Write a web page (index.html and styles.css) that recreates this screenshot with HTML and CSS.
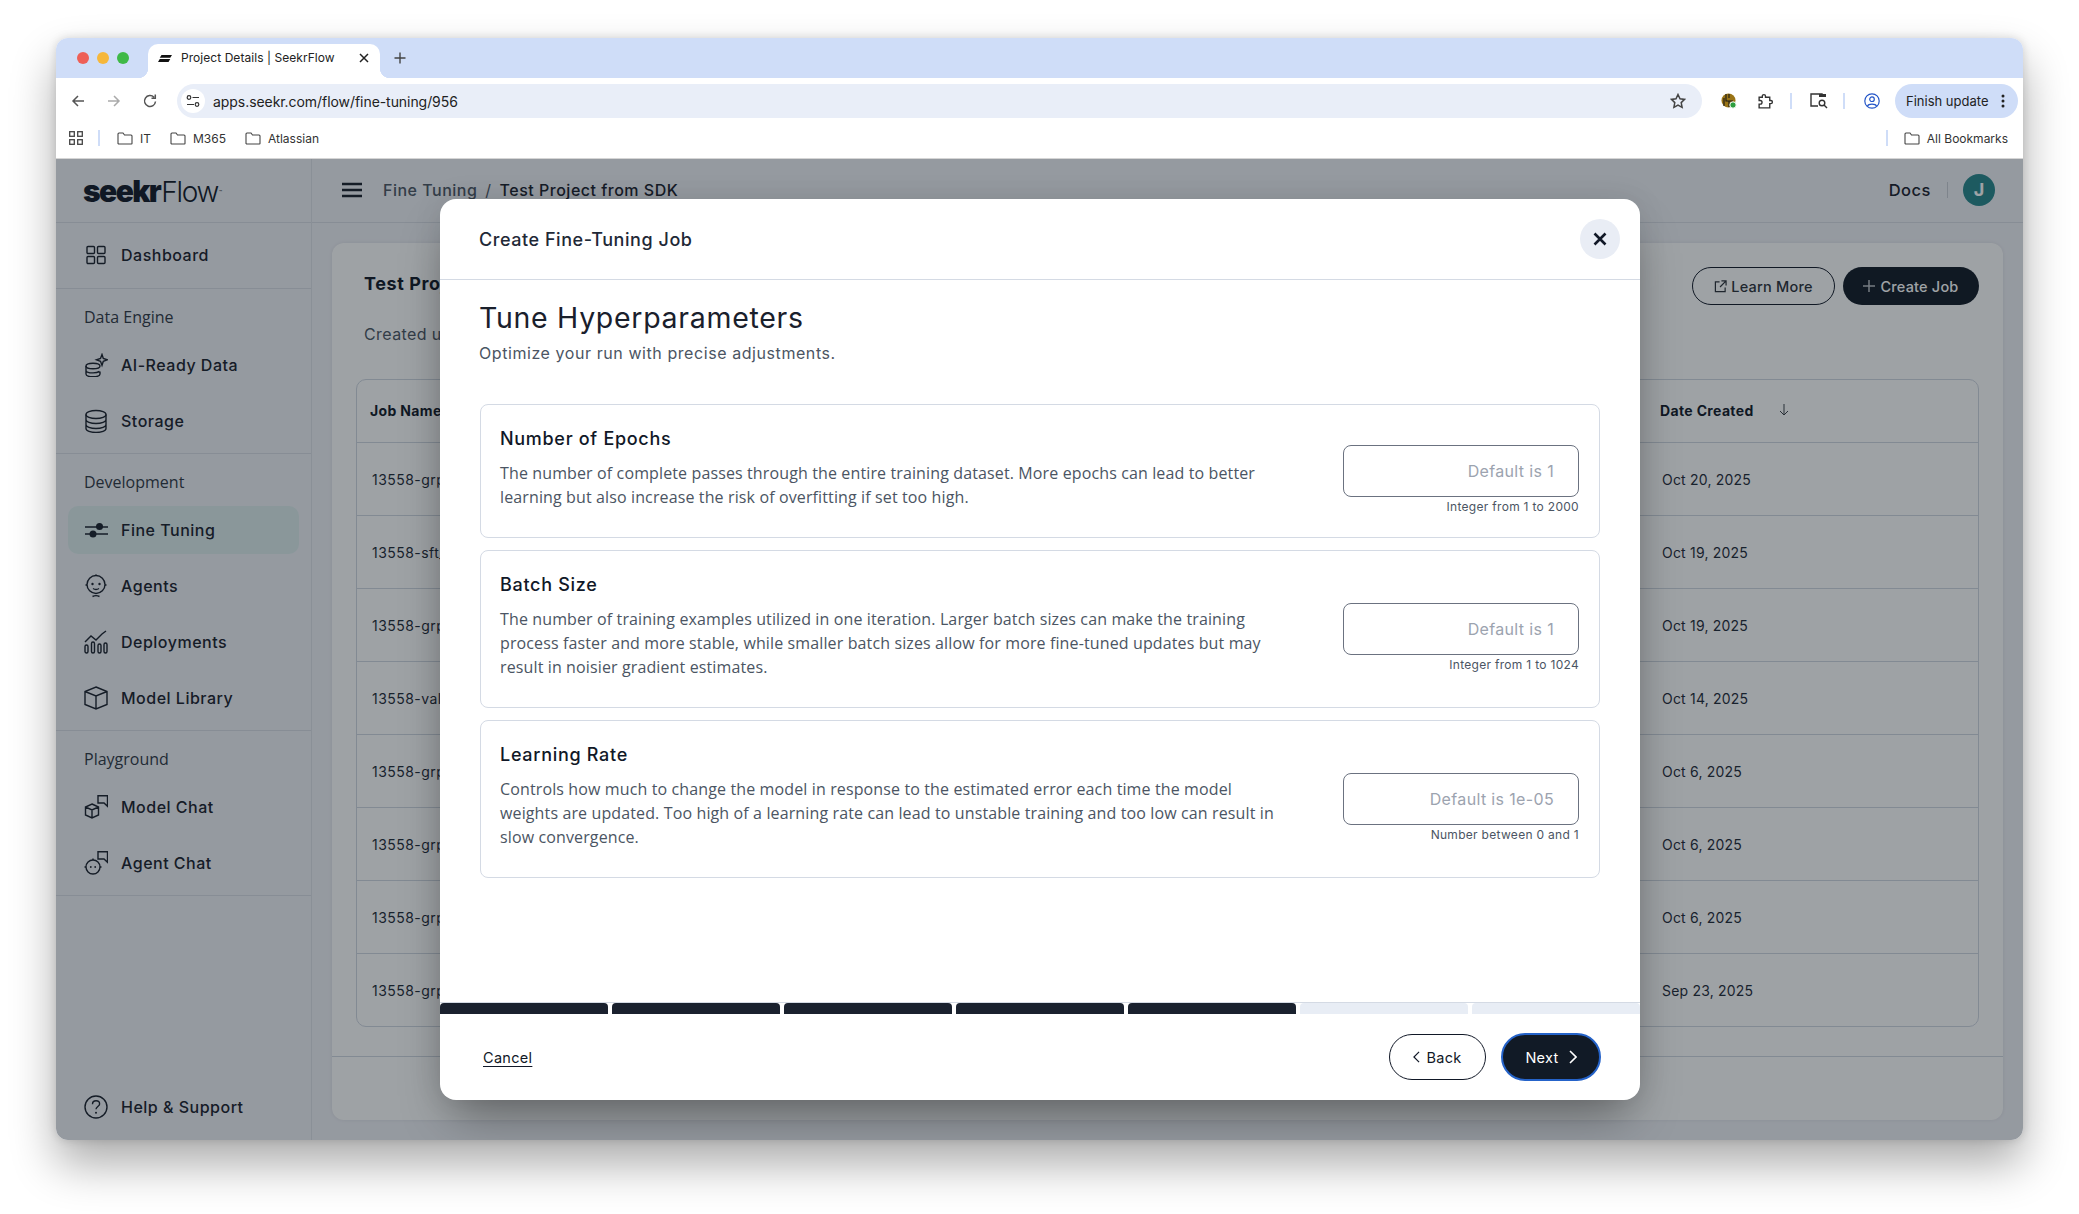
FILE: index.html
```html
<!DOCTYPE html>
<html lang="en">
<head>
<meta charset="utf-8">
<title>Project Details | SeekrFlow</title>
<link rel="stylesheet" href="styles.css">
</head>
<body>
<div class="window">
  <div class="tabstrip">
    <div class="lights"><i class="light red"></i><i class="light amber"></i><i class="light green"></i></div>
    <div class="tab">
      <svg class="favicon" viewBox="0 0 16 8" width="14" height="7"><path d="M4 0h12l-2 3H2zM2 4.500h12L12 8H0z" fill="#111"/></svg>
      <span class="tab-title">Project Details | SeekrFlow</span>
      <svg class="tab-close" viewBox="0 0 10 10" width="10" height="10"><path d="M1 1l8 8M9 1l-8 8" stroke="#222" stroke-width="1.500"/></svg>
    </div>
    <svg class="newtab" viewBox="0 0 12 12" width="12" height="12"><path d="M6 .5v11M.5 6h11" stroke="#444" stroke-width="1.400"/></svg>
  </div>

  <div class="toolbar">
    <div class="nav">
      <span class="tbtn"><svg viewBox="0 0 16 16" width="16" height="16"><path d="M14 8H3M8 3L3 8l5 5" fill="none" stroke="#555" stroke-width="1.500"/></svg></span>
      <span class="tbtn"><svg viewBox="0 0 16 16" width="16" height="16"><path d="M2 8h11M8 3l5 5-5 5" fill="none" stroke="#aaa" stroke-width="1.500"/></svg></span>
      <span class="tbtn"><svg viewBox="0 0 16 16" width="16" height="16"><path d="M13.500 8.500A5.500 5.500 0 1 1 12 4.200M13.300 1.500v3.800H9.500" fill="none" stroke="#555" stroke-width="1.500"/></svg></span>
    </div>
    <div class="omnibox">
      <span class="site"><svg viewBox="0 0 14 14" width="14" height="14"><g fill="none" stroke="#333" stroke-width="1.200"><circle cx="3" cy="3.500" r="1.800"/><circle cx="11" cy="10.500" r="1.800"/><path d="M6.500 3.500H13M1 10.500h7"/></g></svg></span>
      <span class="url">apps.seekr.com/flow/fine-tuning/956</span>
      <svg class="star" viewBox="0 0 16 16" width="16" height="16"><path d="M8 1.500l2 4.300 4.600.6-3.400 3.200.9 4.700L8 12l-4.100 2.300.9-4.700L1.400 6.400 6 5.800z" fill="none" stroke="#444" stroke-width="1.500"/></svg>
    </div>
    <span class="tool"><svg viewBox="0 0 16 16" width="16" height="16"><circle cx="7.500" cy="7.500" r="7" fill="#9a7416"/><path d="M5 1v7h7M8 1v4M3 5v8M8 8v6" stroke="#1a1a1a" stroke-width="1.100" fill="none"/><circle cx="12" cy="12" r="3.200" fill="#2e9e3f" stroke="#fff"/></svg></span>
    <span class="tool"><svg viewBox="0 0 16 16" width="17" height="17"><path d="M2 4h3V3a1.500 1.500 0 0 1 3 0v1h4v3h1a1.500 1.500 0 0 1 0 3h-1v4H2v-3.500h1a1.700 1.700 0 0 0 0-3.500H2z" fill="none" stroke="#333" stroke-width="1.300"/></svg></span>
    <i class="tsep"></i>
    <span class="tool"><svg viewBox="0 0 18 16" width="18" height="16"><path d="M8 13H1V1h11v3" fill="none" stroke="#333" stroke-width="1.400"/><rect x="9" y="1" width="7" height="3" fill="#333"/><circle cx="12" cy="10" r="2.800" fill="none" stroke="#333" stroke-width="1.400"/><path d="M14 12l3 3" stroke="#333" stroke-width="1.400"/></svg></span>
    <i class="tsep"></i>
    <span class="tool"><svg viewBox="0 0 16 16" width="16" height="16"><g fill="none" stroke="#2456c8" stroke-width="1.200"><circle cx="8" cy="8" r="7.200"/><circle cx="8" cy="6.200" r="2.300"/><path d="M3.500 13c1-2.500 8-2.500 9 0"/></g></svg></span>
    <div class="update"><span>Finish update</span><svg viewBox="0 0 4 14" width="4" height="14"><g fill="#222"><circle cx="2" cy="2" r="1.500"/><circle cx="2" cy="7" r="1.500"/><circle cx="2" cy="12" r="1.500"/></g></svg></div>
  </div>

  <div class="bookmarks">
    <svg class="bm-apps" viewBox="0 0 14 14" width="14" height="14"><g fill="none" stroke="#444" stroke-width="1.300"><rect x=".7" y=".7" width="4.600" height="4.600"/><rect x="8.700" y=".7" width="4.600" height="4.600"/><rect x=".7" y="8.700" width="4.600" height="4.600"/><rect x="8.700" y="8.700" width="4.600" height="4.600"/></g></svg>
    <i class="bm-sep"></i>
    <span class="bm bm-it"><svg class="folder" viewBox="0 0 16 13" width="16" height="13"><path d="M1 11.500V2a1 1 0 0 1 1-1h4l1.500 2H14a1 1 0 0 1 1 1v7.500a.5.500 0 0 1-.5.500h-13z" fill="none" stroke="#444" stroke-width="1.100"/></svg>IT</span>
    <span class="bm bm-m"><svg class="folder" viewBox="0 0 16 13" width="16" height="13"><path d="M1 11.500V2a1 1 0 0 1 1-1h4l1.500 2H14a1 1 0 0 1 1 1v7.500a.5.500 0 0 1-.5.500h-13z" fill="none" stroke="#444" stroke-width="1.100"/></svg>M365</span>
    <span class="bm bm-a"><svg class="folder" viewBox="0 0 16 13" width="16" height="13"><path d="M1 11.500V2a1 1 0 0 1 1-1h4l1.500 2H14a1 1 0 0 1 1 1v7.500a.5.500 0 0 1-.5.500h-13z" fill="none" stroke="#444" stroke-width="1.100"/></svg>Atlassian</span>
    <i class="bm-sep bm-sep-right"></i>
    <span class="bm bm-all"><svg class="folder" viewBox="0 0 16 13" width="16" height="13"><path d="M1 11.500V2a1 1 0 0 1 1-1h4l1.500 2H14a1 1 0 0 1 1 1v7.500a.5.500 0 0 1-.5.500h-13z" fill="none" stroke="#444" stroke-width="1.100"/></svg>All Bookmarks</span>
  </div>

  <div class="app">
    <aside class="sidebar">
      <div class="logo"><b>seekr</b><span>Flow</span><sup>™</sup></div>
      <div class="side-section first">
        <a class="side-row"><svg class="ic" viewBox="0 0 24 24"><rect x="3" y="3.500" width="7.500" height="7" rx="1"/><rect x="13.500" y="3.500" width="7.500" height="7" rx="1"/><rect x="3" y="13.500" width="7.500" height="7" rx="1"/><rect x="13.500" y="13.500" width="7.500" height="7" rx="1"/></svg>Dashboard</a>
      </div>
      <div class="side-section">
        <div class="side-label">Data Engine</div>
        <a class="side-row"><svg class="ic" viewBox="0 0 24 24"><ellipse cx="9" cy="13" rx="7" ry="2.800"/><path d="M2 13v8c0 1.600 3 2.800 7 2.800s7-1.200 7-2.800v-2.500M2 17.200c0 1.500 3 2.700 7 2.700 2.800 0 5-.5 6.500-1.500M15.500 11.500"/><path d="M18 1.500l1.300 4 4 1.300-4 1.500-1.300 4-1.500-4-4-1.500 4-1.300z"/></svg>AI-Ready Data</a>
        <a class="side-row"><svg class="ic" viewBox="0 0 24 24"><ellipse cx="12" cy="5.500" rx="10" ry="4"/><path d="M2 5.500v14c0 2.200 4.500 4 10 4s10-1.800 10-4v-14M2 10.500c0 2.200 4.500 4 10 4s10-1.800 10-4M2 15.500c0 2.200 4.500 4 10 4s10-1.800 10-4"/></svg>Storage</a>
      </div>
      <div class="side-section">
        <div class="side-label">Development</div>
        <a class="side-row active"><svg class="ic" viewBox="0 0 24 24"><path d="M1 9h23M1 16h23"/><circle cx="15.500" cy="8.500" r="3.500" class="solid"/><circle cx="9" cy="16" r="3.500" class="solid"/></svg>Fine Tuning</a>
        <a class="side-row"><svg class="ic" viewBox="0 0 24 24"><circle cx="12" cy="10.500" r="9"/><path d="M1.500 11h1.500M21 11h1.500M12 .5v1M8.500 22.500c2-1 5-1 7 0"/><circle cx="8.500" cy="10" r="1.200" class="solid"/><circle cx="15.500" cy="10" r="1.200" class="solid"/><path d="M9 14.500c2 1.300 4 1.300 6 0"/></svg>Agents</a>
        <a class="side-row"><svg class="ic" viewBox="0 0 24 24"><path d="M1 12l6-6 5 4 6-6 4-3"/><rect x="1" y="15" width="3" height="8" rx="1.500"/><rect x="7.500" y="12" width="3" height="11" rx="1.500"/><rect x="14" y="14" width="3" height="9" rx="1.500"/><rect x="20" y="13" width="3" height="10" rx="1.500"/></svg>Deployments</a>
        <a class="side-row"><svg class="ic" viewBox="0 0 24 24"><path d="M12 1l11 4.500v13L12 23 1 18.500v-13zM1 5.500L12 10l11-4.500M12 10v13"/></svg>Model Library</a>
      </div>
      <div class="side-section">
        <div class="side-label">Playground</div>
        <a class="side-row"><svg class="ic" viewBox="0 0 24 24"><path d="M8 9l6.500 3v8L8 23l-6.500-3v-8zM1.500 12L8 15l6.500-3M8 15v8"/><path d="M14 .8h9.500v10.500L20 8h-6z"/></svg>Model Chat</a>
        <a class="side-row"><svg class="ic" viewBox="0 0 24 24"><circle cx="9" cy="16" r="7"/><path d="M9 7.500v1.500M.5 16H2M16 16h1.500"/><circle cx="6.800" cy="16" r=".9" class="solid"/><circle cx="11.200" cy="16" r=".9" class="solid"/><path d="M14 .8h9.500v10.500L20 8h-6z"/></svg>Agent Chat</a>
      </div>
      <a class="side-row help"><svg class="ic" viewBox="0 0 24 24"><circle cx="12" cy="12" r="11"/><path d="M8.500 9.200c0-2 1.600-3.400 3.600-3.400s3.500 1.300 3.500 3.100c0 2.600-3.600 2.700-3.600 5.400"/><circle cx="12" cy="17.700" r="1" class="solid"/></svg>Help &amp; Support</a>
    </aside>

    <main class="main">
      <header class="topbar">
        <svg class="burger" viewBox="0 0 20 16" width="20" height="16"><path d="M0 2h20M0 8h20M0 14h20" stroke="#1a202c" stroke-width="2.400"/></svg>
        <span class="crumb-muted">Fine Tuning</span>
        <span class="crumb-sep">/</span>
        <span class="crumb">Test Project from SDK</span>
        <span class="docs">Docs</span>
        <i class="top-sep"></i>
        <span class="avatar">J</span>
      </header>
      <section class="card">
        <div class="card-head">
          <div class="card-meta">
            <div class="project">Test Project from SDK</div>
            <div class="created">Created using the SDK</div>
          </div>
          <a class="btn-outline"><svg viewBox="0 0 14 14" width="13" height="13"><path d="M6 2H1.500v10.500H12V8M8 1h5v5M13 1L6.500 7.500" fill="none" stroke="#2b3038" stroke-width="1.300"/></svg>Learn More</a>
          <a class="btn-dark"><svg viewBox="0 0 12 12" width="12" height="12"><path d="M6 0v12M0 6h12" stroke="#b9bdc4" stroke-width="1.500"/></svg>Create Job</a>
        </div>
        <div class="table">
          <div class="thead"><span class="name-h">Job Name</span><span class="date-h">Date Created<svg viewBox="0 0 10 12" width="10" height="12"><path d="M5 0v11M1 7l4 4 4-4" fill="none" stroke="#3a3f47" stroke-width="1"/></svg></span></div>
          <div class="trow"><span>13558-grp-finetune</span><span class="date">Oct 20, 2025</span></div>
          <div class="trow"><span>13558-sft_finetune</span><span class="date">Oct 19, 2025</span></div>
          <div class="trow"><span>13558-grp-finetune</span><span class="date">Oct 19, 2025</span></div>
          <div class="trow"><span>13558-validation</span><span class="date">Oct 14, 2025</span></div>
          <div class="trow"><span>13558-grp-finetune</span><span class="date">Oct 6, 2025</span></div>
          <div class="trow"><span>13558-grp-finetune</span><span class="date">Oct 6, 2025</span></div>
          <div class="trow"><span>13558-grp-finetune</span><span class="date">Oct 6, 2025</span></div>
          <div class="trow"><span>13558-grp-finetune</span><span class="date">Sep 23, 2025</span></div>
        </div>
        <div class="card-foot"></div>
      </section>
    </main>

    <div class="overlay"></div>

    <div class="modal">
      <div class="modal-head">
        <span class="modal-title">Create Fine-Tuning Job</span>
        <button class="close"><svg viewBox="0 0 14 14" width="14" height="14"><path d="M1.500 1.500l11 11M12.500 1.500l-11 11" stroke="#111827" stroke-width="2.600"/></svg></button>
      </div>
      <div class="modal-body">
        <h1>Tune Hyperparameters</h1>
        <p class="sub">Optimize your run with precise adjustments.</p>
        <div class="params">
          <div class="param">
            <div class="param-text">
              <h2>Number of Epochs</h2>
              <p>The number of complete passes through the entire training dataset. More epochs can lead to better learning but also increase the risk of overfitting if set too high.</p>
            </div>
            <div class="param-input"><input placeholder="Default is 1"><small>Integer from 1 to 2000</small></div>
          </div>
          <div class="param">
            <div class="param-text">
              <h2>Batch Size</h2>
              <p>The number of training examples utilized in one iteration. Larger batch sizes can make the training process faster and more stable, while smaller batch sizes allow for more fine-tuned updates but may result in noisier gradient estimates.</p>
            </div>
            <div class="param-input"><input placeholder="Default is 1"><small>Integer from 1 to 1024</small></div>
          </div>
          <div class="param">
            <div class="param-text">
              <h2>Learning Rate</h2>
              <p>Controls how much to change the model in response to the estimated error each time the model weights are updated. Too high of a learning rate can lead to unstable training and too low can result in slow convergence.</p>
            </div>
            <div class="param-input"><input placeholder="Default is 1e-05"><small>Number between 0 and 1</small></div>
          </div>
        </div>
      </div>
      <div class="progress"><i class="on"></i><i class="on"></i><i class="on"></i><i class="on"></i><i class="on"></i><i></i><i></i></div>
      <div class="modal-foot">
        <a class="cancel">Cancel</a>
        <a class="back"><svg viewBox="0 0 8 14" width="7" height="12"><path d="M7 1L1 7l6 6" fill="none" stroke="#111827" stroke-width="1.400"/></svg>Back</a>
        <a class="next">Next<svg viewBox="0 0 8 14" width="8" height="14"><path d="M1 1l6 6-6 6" fill="none" stroke="#fff" stroke-width="1.600"/></svg></a>
      </div>
    </div>
  </div>
</div>
</body>
</html>
```
FILE: styles.css
```css
* { box-sizing: border-box; }
html, body { margin: 0; height: 100%; background: #fff; overflow: hidden; }
body { padding: 38px 56px 0; font-family: "Inter", "Noto Sans", sans-serif; color: #111827; }
a { display: flex; }
i { display: block; }

.window {
  height: 1102px;
  border-radius: 12px;
  overflow: hidden;
  display: flex;
  flex-direction: column;
  background: #fff;
  box-shadow: 0 24px 46px rgba(0,0,0,.33), 0 0 10px rgba(0,0,0,.14);
}

/* browser chrome */
.tabstrip { height: 40px; background: #cfddf8; display: flex; align-items: flex-end; flex: none; }
.lights { display: flex; gap: 8px; padding: 0 0 14px 21px; width: 92px; }
.light { width: 12px; height: 12px; border-radius: 50%; }
.red { background: #ee5f57; }
.amber { background: #f6b73b; }
.green { background: #3fb947; }
.tab { position: relative; width: 232px; height: 34px; background: #fff; border-radius: 10px 10px 0 0; display: flex; align-items: center; padding: 0 0 6px 10px; font: 12px/1 "Inter", sans-serif; color: #222; }
.tab::before, .tab::after { content: ""; position: absolute; bottom: 0; width: 10px; height: 10px; }
.tab::before { left: -10px; background: radial-gradient(circle at 0 0, transparent 10px, #fff 10.5px); }
.tab::after { right: -10px; background: radial-gradient(circle at 100% 0, transparent 10px, #fff 10.5px); }
.favicon { margin-right: 9px; }
.tab-title { flex: 1; letter-spacing: .05px; }
.tab-close { margin-right: 11px; }
.newtab { margin: 0 0 14px 14px; }

.toolbar { height: 44px; padding-top: 6px; display: flex; align-items: flex-start; flex: none; background: #fff; }
.nav { display: flex; padding-left: 4px; width: 121px; }
.tbtn { width: 36px; height: 34px; display: flex; align-items: center; justify-content: center; }
.omnibox { width: 1525px; height: 34px; border-radius: 17px; background: #e9eef8; display: flex; align-items: center; padding: 0 16px 0 4px; flex: none; }
.site { width: 24px; height: 24px; border-radius: 50%; background: #fff; display: flex; align-items: center; justify-content: center; margin-right: 8px; }
.url { flex: 1; font-size: 14px; color: #222; letter-spacing: -.06px; }
.tool { width: 37px; height: 34px; display: flex; align-items: center; justify-content: center; }
.tool:first-of-type { margin-left: 8px; }
.tsep { width: 2px; height: 16px; margin: 9px 8px 0 6px; background: #cfddf8; }
.update { margin-left: 5px; width: 123px; height: 34px; border-radius: 17px; background: #cfddf8; display: flex; align-items: center; justify-content: space-between; padding: 0 13px 0 11px; font-size: 13px; color: #222; }

.bookmarks { height: 37px; flex: none; display: flex; align-items: center; font-size: 12px; color: #333; border-bottom: 1px solid #d5d5d5; padding-bottom: 4px; background: #fff; }
.bm { display: flex; align-items: center; gap: 7px; }
.folder { flex: none; }
.bm-apps { margin-left: 13px; }
.bm-sep { width: 2px; height: 16px; background: #cfddf8; margin-left: 15px; }
.bm-it { margin-left: 17px; }
.bm-m { margin-left: 19px; }
.bm-a { margin-left: 19px; }
.bm-sep-right { margin-left: auto; }
.bm-all { margin: 0 15px 0 16px; }

/* app */
.app { position: relative; flex: 1; display: flex; min-height: 0; background: #eff0f6; }
.sidebar { width: 256px; flex: none; border-right: 1px solid #dde0e7; display: flex; flex-direction: column; }
.logo { height: 64px; flex: none; border-bottom: 1px solid #d7dbe3; padding: 12px 0 0 27px; display: flex; align-items: baseline; font-size: 30px; line-height: 40px; color: #111827; }
.logo b { font-weight: 900; letter-spacing: -1.600px; }
.logo span { font-weight: 300; font-size: 28px; letter-spacing: -1.300px; margin-left: 1px; }
.logo sup { font-size: 5px; line-height: 1; margin-left: 1px; align-self: center; margin-top: -8px; }
.side-section { padding: 16px 12px 8px; border-bottom: 1px solid #d7dbe3; }
.side-section.first { padding: 8px 12px 9px; }
.side-label { font: 500 16px/24px "Open Sans", sans-serif; color: #2f3744; padding-left: 16px; margin-bottom: 12px; }
.side-row { height: 48px; margin-bottom: 8px; padding-left: 16px; border-radius: 10px; align-items: center; gap: 13px; font-size: 16px; font-weight: 500; letter-spacing: .5px; color: #1a202c; }
.side-row:last-child { margin-bottom: 0; }
.side-row.active { background: #dcecec; }
.ic { width: 24px; height: 24px; flex: none; fill: none; stroke: #1a202c; stroke-width: 1.400; }
.ic .solid { fill: #1a202c; stroke: none; }
.side-row.help { margin: auto 12px 9px; }

.main { flex: 1; min-width: 0; display: flex; flex-direction: column; }
.topbar { height: 64px; flex: none; border-bottom: 1px solid #d7dbe3; display: flex; align-items: center; padding: 0 28px 2px 30px; font-size: 16px; letter-spacing: .5px; }
.burger { margin-right: 21px; }
.crumb-muted { color: #4b5563; font-weight: 500; }
.crumb-sep { margin: 0 8px; color: #4b5563; }
.crumb { font-weight: 500; color: #1a202c; }
.docs { margin-left: auto; font-size: 16.500px; font-weight: 500; color: #1a202c; }
.top-sep { width: 1px; height: 16px; background: #c8ccd4; margin: 0 15px 0 16px; }
.avatar { width: 32px; height: 32px; border-radius: 50%; background: #27868b; color: #fff; display: flex; align-items: center; justify-content: center; font-size: 18px; font-weight: 700; letter-spacing: 0; }

.card { margin: 20px; flex: 1; background: #fefefe; border-radius: 12px; display: flex; flex-direction: column; box-shadow: 0 0 4px rgba(0,0,0,.08); padding: 0 24px; }
.card-head { height: 136px; display: flex; align-items: flex-start; padding-top: 24px; flex: none; }
.card-meta { flex: 1; padding-left: 8px; }
.project { font-size: 18px; font-weight: 700; line-height: 34px; letter-spacing: .6px; }
.created { font-size: 16px; line-height: 24px; margin-top: 21px; color: #4b5563; letter-spacing: .4px; }
.btn-outline, .btn-dark { height: 38px; border-radius: 19px; align-items: center; justify-content: center; font-size: 14.500px; font-weight: 500; letter-spacing: .2px; gap: 4px; }
.btn-outline { width: 143px; border: 1px solid #111827; color: #2b3038; margin-right: 8px; }
.btn-dark { width: 136px; background: #111a26; color: #fff; gap: 5px; }
.table { height: 648px; flex: none; border: 1px solid #cfd5e0; border-radius: 10px; }
.thead, .trow { display: flex; justify-content: space-between; align-items: center; border-bottom: 1px solid #cfd5e0; font-size: 14px; letter-spacing: .45px; }
.thead { height: 63px; font-weight: 700; padding: 0 0 2px 13px; letter-spacing: .35px; }
.date-h { width: 318px; display: flex; align-items: center; gap: 25px; }
.trow { height: 73px; padding-left: 15px; color: #1f2937; }
.trow:last-child { border-bottom: 0; }
.date { width: 316px; letter-spacing: .2px; }
.card-foot { margin: 29px -24px 0; border-top: 1px solid #cfd5e0; flex: 1; }

.overlay { position: absolute; inset: 0; background: rgba(15,25,32,.4); }

/* modal */
.modal { position: absolute; left: 384px; top: 40px; width: 1200px; height: 901px; background: #fff; border-radius: 16px; display: flex; flex-direction: column; overflow: hidden; box-shadow: 0 25px 50px -12px rgba(0,0,0,.4), 0 0 30px rgba(0,0,0,.08); }
.modal-head { height: 81px; flex: none; border-bottom: 1px solid #d4dae4; display: flex; align-items: center; justify-content: space-between; padding: 0 20px 0 39px; }
.modal-title { font-size: 18px; font-weight: 500; letter-spacing: .55px; color: #1f2937; }
.close { width: 40px; height: 40px; border-radius: 50%; border: 0; padding: 0; background: #e9edf5; display: flex; align-items: center; justify-content: center; }
.modal-body { flex: 1; padding: 0 40px; min-height: 0; }
h1 { margin: 20px 0 0 -1px; font-size: 28.500px; line-height: 36px; font-weight: 400; letter-spacing: .7px; color: #1a202c; }
.sub { margin: 5px 0 0 -1px; font-size: 16px; line-height: 24px; letter-spacing: .57px; color: #4b5563; }
.params { margin-top: 39px; display: flex; flex-direction: column; gap: 12px; }
.param { border: 1px solid #d4dae4; border-radius: 8px; padding: 22px 20px 28px 19px; display: flex; justify-content: space-between; align-items: center; }
.param-text { width: 785px; }
h2 { margin: 0 0 10px; font-size: 18px; line-height: 24px; font-weight: 500; letter-spacing: .7px; color: #111827; }
.param-text p { margin: 0; font: 16px/24px "Open Sans", sans-serif; letter-spacing: .125px; color: #4b5563; }
.param-input { width: 236px; flex: none; margin: -7px 0 -13px; padding-top: 20px; display: flex; flex-direction: column; align-items: flex-end; }
.param-input input { width: 236px; height: 52px; border: 1px solid #6b7280; border-radius: 8px; padding: 0 24px; text-align: right; font: 16px "Inter", sans-serif; letter-spacing: .35px; background: #fff; outline: 0; }
.param-input input::placeholder { color: #9ca3af; opacity: 1; }
.param-input small { height: 20px; font-size: 12px; line-height: 20px; letter-spacing: .3px; color: #4b5563; }
.progress { height: 12px; flex: none; display: flex; gap: 4px; border-top: 1px solid #d4dae4; }
.progress i { flex: 1; background: #e8edf5; border-radius: 4px 4px 0 0; }
.progress i.on { background: #1a212e; }
.modal-foot { height: 86px; flex: none; display: flex; align-items: center; padding: 0 39px 0 43px; font-size: 14.500px; font-weight: 500; letter-spacing: .3px; }
.cancel { text-decoration: underline; text-underline-offset: 3px; margin-right: auto; color: #111827; font-weight: 400; }
.back, .next { align-items: center; justify-content: center; border-radius: 24px; }
.back { width: 97px; height: 46px; border: 1px solid #111827; gap: 6px; margin-right: 15px; font-weight: 400; }
.next { width: 100px; height: 48px; background: #111a26; color: #fff; border: 2px solid #2563c9; gap: 10px; font-weight: 400; }
```
